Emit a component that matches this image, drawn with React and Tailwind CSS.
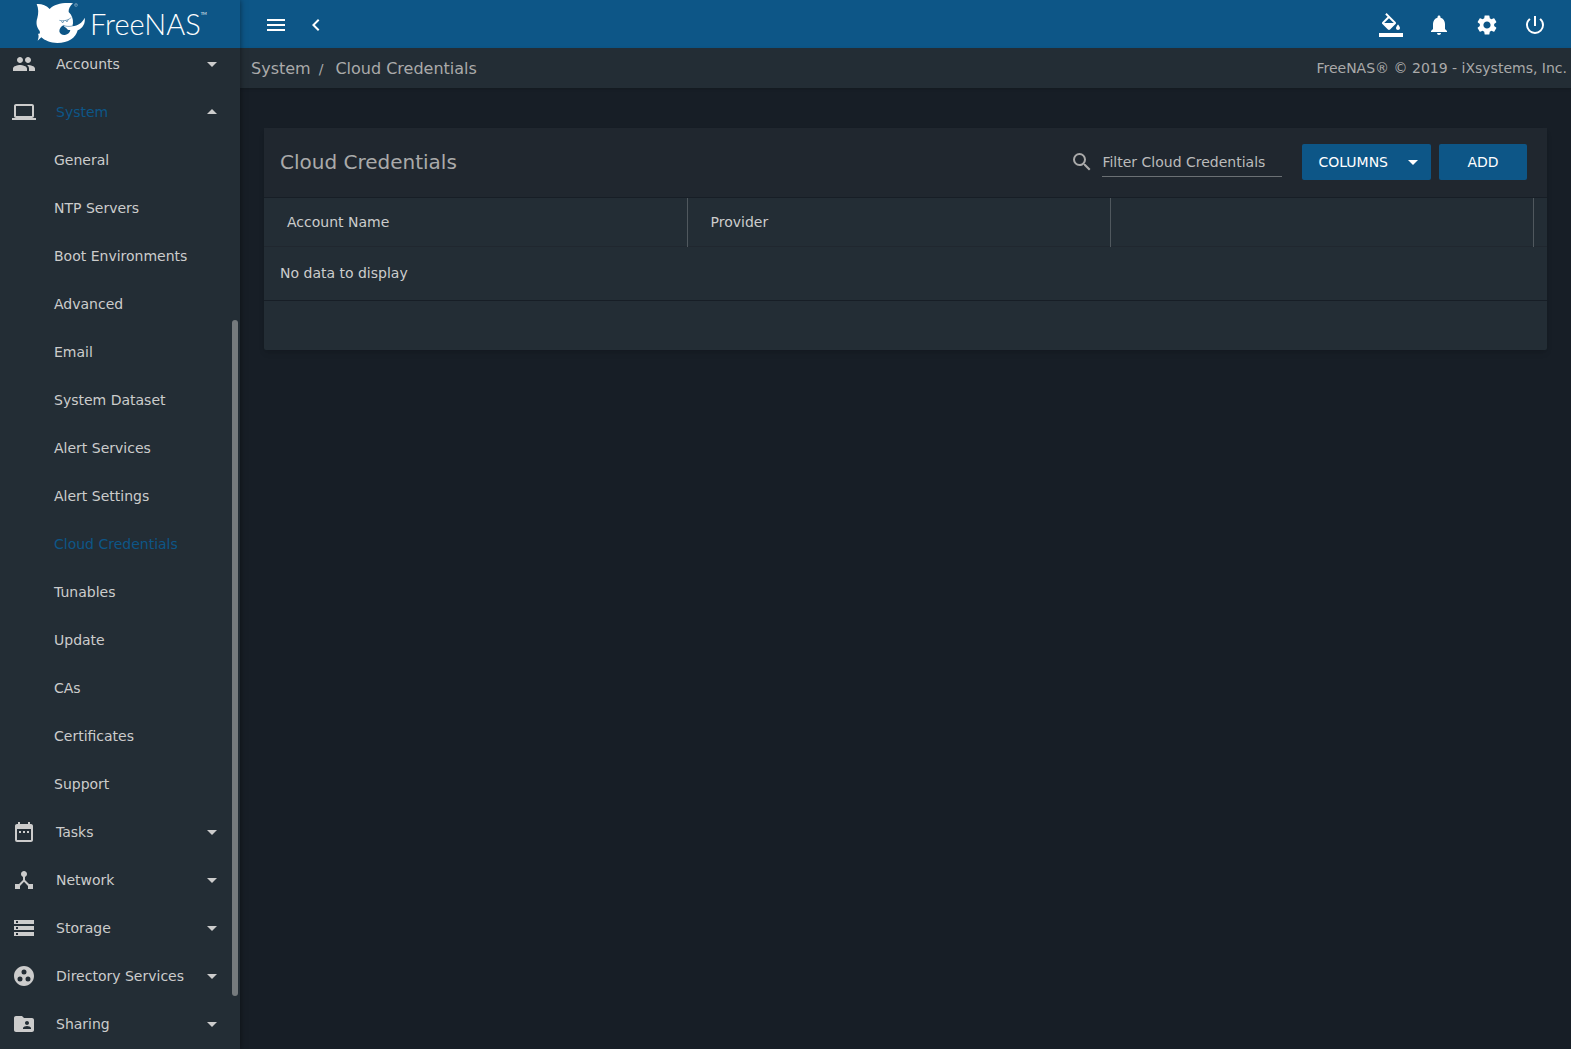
import React from "react";
import {
  MdArrowDropDown,
  MdArrowDropUp,
  MdChevronLeft,
  MdDateRange,
  MdDeviceHub,
  MdFolderShared,
  MdGroupWork,
  MdLaptop,
  MdMenu,
  MdNotifications,
  MdPeople,
  MdPowerSettingsNew,
  MdSearch,
  MdSettings,
  MdStorage,
} from "react-icons/md";

const menu = [
  { name: "Accounts", icon: MdPeople },
  {
    name: "System",
    icon: MdLaptop,
    open: true,
    children: [
      "General",
      "NTP Servers",
      "Boot Environments",
      "Advanced",
      "Email",
      "System Dataset",
      "Alert Services",
      "Alert Settings",
      "Cloud Credentials",
      "Tunables",
      "Update",
      "CAs",
      "Certificates",
      "Support",
    ],
  },
  { name: "Tasks", icon: MdDateRange },
  { name: "Network", icon: MdDeviceHub },
  { name: "Storage", icon: MdStorage },
  { name: "Directory Services", icon: MdGroupWork },
  { name: "Sharing", icon: MdFolderShared },
];

const Logo = () => (
  <a
    href="#home"
    aria-label="FreeNAS"
    className="flex h-12 shrink-0 items-center bg-[#0d5687] pl-[34px] text-white"
  >
    <svg width="56" height="48" viewBox="0 0 168 144" fill="currentColor">
      <path d="M8 12C22 11 37 15 47 27C61 12 88 7 117 10C108 18 103 28 104 36C113 44 118 57 117 70L115 79C132 77 144 69 152 53C155 70 146 84 131 91C125 114 103 129 70 129C50 129 31 121 22 112L11 122C14 112 15 108 12 101C17 103 19 99 17 93C8 82 5 69 10 54C14 40 14 26 8 12Z" />
      <path
        d="M89 76C82 78 76 85 76 94C77 102 85 106 93 105C102 103 108 98 109 90C103 91 99 88 97 84C94 82 90 81 89 76Z"
        fill="#0d5687"
      />
      <path
        d="M76 61C90 64 103 61 112 52M82 63L86 69L90 62M95 61L99 66L103 58M89 76C97 80 106 80 115 78"
        fill="none"
        stroke="#0d5687"
        strokeWidth="1.500"
      />
      <circle cx="126" cy="15" r="4.500" fill="none" stroke="currentColor" strokeWidth="1.200" opacity=".7" />
      <path d="M125 17v-4h2v2h-2" fill="none" stroke="currentColor" opacity=".7" />
    </svg>
    <span className="mb-0.5 font-[Lato] text-[29px] leading-none font-light">FreeNAS</span>
    <span className="mb-5 font-[Lato] text-[4px] leading-none">TM</span>
  </a>
);

const FillIcon = () => (
  <svg width="24" height="24" viewBox="0 0 24 24" fill="currentColor">
    <path d="M16.560 8.940L7.620 0 6.210 1.410l2.380 2.380-5.150 5.150c-.59.59-.59 1.540 0 2.120l5.500 5.500c.29.29.68.44 1.060.44s.77-.15 1.060-.44l5.500-5.500c.59-.58.59-1.530 0-2.120zM5.210 10L10 5.210 14.790 10H5.210zM19 11.500s-2 2.170-2 3.500c0 1.100.9 2 2 2s2-.9 2-2c0-1.330-2-3.500-2-3.500zM0 20h24v4H0z" />
  </svg>
);

const MenuGroup = ({ item }) => {
  const Icon = item.icon;
  const Arrow = item.open ? MdArrowDropUp : MdArrowDropDown;
  return (
    <li>
      <button
        type="button"
        aria-expanded={!!item.open}
        className="flex h-12 w-full items-center pr-4 pl-3 text-left"
      >
        <Icon size={24} className="mr-5" />
        <span className={item.open ? "flex-1 text-[#0d5687]" : "flex-1"}>{item.name}</span>
        <Arrow size={24} />
      </button>
      {item.children && (
        <ul>
          {item.children.map((child) => (
            <li key={child}>
              <a
                href="#system"
                className={`flex h-12 items-center pl-[54px] ${
                  child === "Cloud Credentials" ? "text-[#0d5687]" : ""
                }`}
              >
                {child}
              </a>
            </li>
          ))}
        </ul>
      )}
    </li>
  );
};

const Sidebar = () => (
  <aside className="relative z-10 flex h-screen w-60 shrink-0 flex-col bg-[#232d35] text-[#cccccc] shadow-[0_0_6px_rgba(0,0,0,0.5)]">
    <Logo />
    <nav className="flex-1 overflow-hidden">
      <ul className="-mt-2">
        {menu.map((item) => (
          <MenuGroup key={item.name} item={item} />
        ))}
      </ul>
    </nav>
    <div className="absolute top-[320px] right-0.5 bottom-[53px] w-1.5 rounded-full bg-[#757a7d]" />
  </aside>
);

const TopBar = () => (
  <header className="flex h-12 items-center justify-between bg-[#0d5687] px-6 text-white">
    <div className="flex items-center gap-4 pt-0.5">
      <button type="button" aria-label="Toggle menu">
        <MdMenu size={24} />
      </button>
      <button type="button" aria-label="Collapse menu">
        <MdChevronLeft size={24} />
      </button>
    </div>
    <div className="flex items-center gap-6 pt-0.5">
      <button type="button" aria-label="Theme">
        <FillIcon />
      </button>
      <button type="button" aria-label="Notifications">
        <MdNotifications size={24} />
      </button>
      <button type="button" aria-label="Settings">
        <MdSettings size={24} />
      </button>
      <button type="button" aria-label="Power">
        <MdPowerSettingsNew size={24} />
      </button>
    </div>
  </header>
);

const Breadcrumb = () => (
  <div className="flex h-10 items-center justify-between bg-[#232d35] pr-1 pl-[11px] text-[#aaaaaa] shadow">
    <div className="flex items-center pt-px text-base">
      <a href="#system">System</a>
      <span className="mr-3 ml-2 text-sm">/</span>
      <a href="#cloud">Cloud Credentials</a>
    </div>
    <span>FreeNAS® © 2019 - iXsystems, Inc.</span>
  </div>
);

const CredentialsCard = () => (
  <section className="rounded-xs bg-[#232d35] text-[#cccccc] shadow-md">
    <div className="flex h-[70px] items-center border-b border-[#171e26] bg-[#20272f] pr-5 pb-px pl-4">
      <h1 className="flex-1 text-xl text-[#aaaaaa]">Cloud Credentials</h1>
      <label htmlFor="filter" aria-label="Filter" className="mr-2 text-[#aaaaaa]">
        <MdSearch size={24} />
      </label>
      <input
        id="filter"
        type="text"
        placeholder="Filter Cloud Credentials"
        className="mr-5 h-[30px] w-[180px] border-b border-[#6b7074] bg-transparent outline-none placeholder:text-[#bbbbbb]"
      />
      <button
        type="button"
        className="mr-2 flex h-9 items-center rounded-xs bg-[#0d5687] pr-1.5 pl-4 text-white"
      >
        COLUMNS
        <MdArrowDropDown size={24} className="ml-[13px]" />
      </button>
      <button type="button" className="h-9 w-[88px] rounded-xs bg-[#0d5687] text-white">
        ADD
      </button>
    </div>
    <table className="w-full table-fixed">
      <thead>
        <tr className="h-12 border-b border-[#20272f] text-left">
          <th className="border-r border-[#50585e] pl-[23px] font-normal">Account Name</th>
          <th className="border-r border-[#50585e] pl-[23px] font-normal">Provider</th>
          <th aria-label="Actions" className="border-r border-[#50585e]" />
          <th aria-hidden="true" className="w-3.5" />
        </tr>
      </thead>
      <tbody>
        <tr className="h-[54px] border-b border-[#171e26]">
          <td colSpan={4} className="pl-4">
            No data to display
          </td>
        </tr>
      </tbody>
    </table>
    <div className="h-[49px]" />
  </section>
);

const App = () => {
  return (
    <div className="flex min-h-screen bg-[#171e26] font-['DejaVu_Sans',sans-serif] text-sm">
      <Sidebar />
      <div className="min-w-0 flex-1">
        <TopBar />
        <Breadcrumb />
        <main className="px-6 py-10">
          <CredentialsCard />
        </main>
      </div>
    </div>
  );
};

export default App;
